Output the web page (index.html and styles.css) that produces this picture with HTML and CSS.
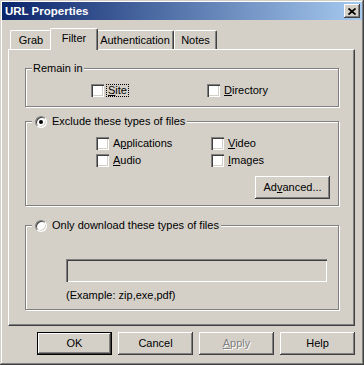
FILE: index.html
```html
<!DOCTYPE html>
<html>
<head>
<meta charset="utf-8">
<link rel="stylesheet" href="styles.css">
</head>
<body>
<div class="window">
  <div class="titlebar">
    <span class="title">URL Properties</span>
    <span class="close-btn"><svg width="8" height="7" viewBox="0 0 8 7"><path d="M0.5 0.5 L7.5 6.5 M7.5 0.5 L0.5 6.5" stroke="#000" stroke-width="1.7" fill="none"/></svg></span>
  </div>
  <div class="client">
    <div class="tabs">
      <div class="tab tab-grab">Grab</div>
      <div class="tab tab-filter active">Filter</div>
      <div class="tab tab-auth">Authentication</div>
      <div class="tab tab-notes">Notes</div>
    </div>
    <div class="panel">
      <fieldset class="group group-remain">
        <legend class="legend">Remain in</legend>
        <div class="checks checks-remain">
          <label class="check"><span class="box"></span><span class="text focus"><u>S</u>ite</span></label>
          <label class="check"><span class="box"></span><span class="text"><u>D</u>irectory</span></label>
        </div>
      </fieldset>
      <fieldset class="group group-exclude">
        <legend class="legend legend-radio"><span class="radio checked"></span><span class="radio-text">Exclude these types of files</span></legend>
        <div class="checks checks-exclude">
          <label class="check"><span class="box"></span><span class="text">A<u>p</u>plications</span></label>
          <label class="check"><span class="box"></span><span class="text"><u>V</u>ideo</span></label>
          <label class="check"><span class="box"></span><span class="text"><u>A</u>udio</span></label>
          <label class="check"><span class="box"></span><span class="text"><u>I</u>mages</span></label>
        </div>
        <div class="advanced-row">
          <span class="btn">Ad<u>v</u>anced...</span>
        </div>
      </fieldset>
      <fieldset class="group group-only">
        <legend class="legend legend-radio"><span class="radio"></span><span class="radio-text">Only download these types of files</span></legend>
        <div class="only-body">
          <div class="textbox"></div>
          <div class="example">(Example: zip,exe,pdf)</div>
        </div>
      </fieldset>
    </div>
    <div class="buttons">
      <span class="btn default">OK</span>
      <span class="btn">Cancel</span>
      <span class="btn disabled"><u>A</u>pply</span>
      <span class="btn">Help</span>
    </div>
  </div>
</div>
</body>
</html>
```
FILE: styles.css
```css
html, body {
  margin: 0;
  padding: 0;
  background: #D4D0C8;
}
body {
  font-family: "Liberation Sans", Arial, sans-serif;
  font-size: 11px;
  line-height: 13px;
  color: #000;
}
.window {
  width: 364px;
  height: 365px;
  box-sizing: border-box;
  padding: 2px;
  background: #D4D0C8;
  box-shadow: inset -1px -1px 0 #404040, inset 1px 1px 0 #D4D0C8, inset -2px -2px 0 #808080, inset 2px 2px 0 #fff;
}
.titlebar {
  height: 18px;
  display: flex;
  align-items: center;
  justify-content: space-between;
  padding-left: 3px;
  padding-right: 2px;
  background: linear-gradient(to right, #0A246A, #A6CAF0);
}
.title {
  color: #fff;
  font-weight: bold;
  font-size: 11.5px;
}
.close-btn {
  width: 16px;
  height: 14px;
  display: flex;
  align-items: center;
  justify-content: center;
  background: #D4D0C8;
  box-shadow: inset -1px -1px 0 #404040, inset 1px 1px 0 #fff, inset -2px -2px 0 #808080;
}
.close-btn svg {
  display: block;
  margin-left: -1px;
}
.client {
  padding: 8px 7px 0 6px;
}
.tabs {
  display: flex;
  align-items: flex-end;
  height: 21px;
  padding-left: 2px;
}
.tab {
  box-sizing: border-box;
  height: 19px;
  padding-top: 3px;
  text-align: center;
  background: #D4D0C8;
  border-top: 1px solid #fff;
  border-left: 1px solid #fff;
  border-right: 1px solid #404040;
  border-radius: 2px 2px 0 0;
  box-shadow: inset -1px 0 0 #808080;
}
.tab-grab { width: 42px; }
.tab-filter { width: 44px; }
.tab-auth { width: 78px; }
.tab-notes { width: 43px; }
.tab.active {
  position: relative;
  z-index: 1;
  width: 48px;
  height: 22px;
  margin: 0 -2px -1px;
  padding-top: 3px;
}
.panel {
  box-sizing: border-box;
  height: 277px;
  padding: 12px 15px 0 16px;
  border-top: 1px solid #fff;
  border-left: 1px solid #fff;
  border-right: 1px solid #404040;
  border-bottom: 1px solid #404040;
  box-shadow: inset -1px -1px 0 #808080;
}
.group {
  margin: 0;
  padding: 0;
  min-width: 0;
  border: 1px solid #808080;
  box-shadow: inset 1px 1px 0 #fff, 1px 1px 0 #fff;
}
.group-exclude { margin-top: 8px; }
.group-only { margin-top: 13px; }
.legend {
  margin-left: 6px;
  padding: 0 1px;
  background: #D4D0C8;
  line-height: 13px;
}
.legend-radio {
  display: flex;
  align-items: center;
}
.radio {
  box-sizing: border-box;
  width: 12px;
  height: 12px;
  margin-left: 2px;
  border-radius: 50%;
  background: #fff;
  border: 1px solid;
  border-color: #808080 #fff #fff #808080;
  box-shadow: inset 1px 1px 0 #404040, inset -1px -1px 0 #D4D0C8;
  display: flex;
  align-items: center;
  justify-content: center;
}
.radio.checked::after {
  content: "";
  width: 4px;
  height: 4px;
  border-radius: 50%;
  background: #000;
}
.radio-text {
  margin-left: 5px;
  padding-right: 1px;
}
.checks {
  display: grid;
}
.checks-remain {
  grid-template-columns: 116px 116px;
  padding: 9px 0 9px 65px;
}
.checks-exclude {
  grid-template-columns: 115px 115px;
  row-gap: 4px;
  padding: 9px 0 0 70px;
}
.check {
  display: flex;
  align-items: center;
  height: 13px;
}
.box {
  box-sizing: border-box;
  width: 13px;
  height: 13px;
  flex: none;
  background: #fff;
  box-shadow: inset 1px 1px 0 #808080, inset 2px 2px 0 #404040, inset -1px -1px 0 #fff, inset -2px -2px 0 #D4D0C8;
  margin-right: 2px;
}
.text {
  padding: 0 1px;
  border: 1px solid transparent;
  line-height: 11px;
}
.text.focus {
  border: 1px dotted #000;
}
.advanced-row {
  display: flex;
  justify-content: flex-end;
  padding: 9px 8px 6px 0;
}
.btn {
  box-sizing: border-box;
  width: 75px;
  height: 23px;
  display: flex;
  align-items: center;
  justify-content: center;
  background: #D4D0C8;
  box-shadow: inset -1px -1px 0 #404040, inset 1px 1px 0 #fff, inset -2px -2px 0 #808080, inset 2px 2px 0 #D4D0C8;
}
.btn.default {
  border: 1px solid #000;
}
.btn.disabled {
  color: #808080;
  text-shadow: 1px 1px 0 #fff;
}
.only-body {
  padding: 27px 11px 7px 40px;
}
.textbox {
  box-sizing: border-box;
  width: 261px;
  height: 23px;
  background: #D4D0C8;
  box-shadow: inset 1px 1px 0 #808080, inset 2px 2px 0 #404040, inset -1px -1px 0 #fff, inset -2px -2px 0 #D4D0C8;
}
.example {
  margin-top: 7px;
  line-height: 13px;
}
.buttons {
  display: flex;
  justify-content: flex-end;
  gap: 6px;
  margin-top: 6px;
}
```
